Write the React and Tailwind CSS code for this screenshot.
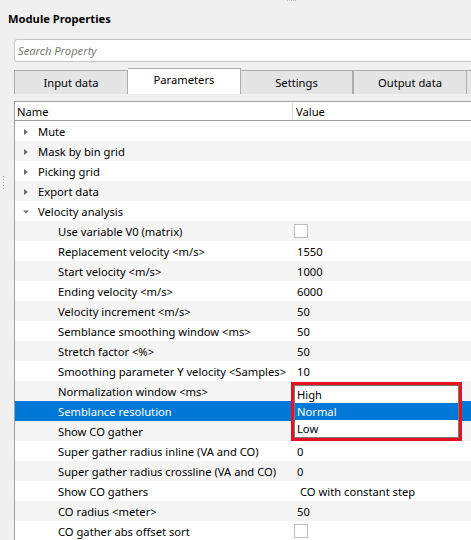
import React from "react";

const rows = [
  { name: "Mute", group: true },
  { name: "Mask by bin grid", group: true },
  { name: "Picking grid", group: true },
  { name: "Export data", group: true },
  { name: "Velocity analysis", group: true, open: true },
  { name: "Use variable V0 (matrix)", check: true },
  { name: "Replacement velocity <m/s>", value: "1550" },
  { name: "Start velocity <m/s>", value: "1000" },
  { name: "Ending velocity <m/s>", value: "6000" },
  { name: "Velocity increment <m/s>", value: "50" },
  { name: "Semblance smoothing window <ms>", value: "50" },
  { name: "Stretch factor <%>", value: "50" },
  { name: "Smoothing parameter Y velocity <Samples>", value: "10" },
  { name: "Normalization window <ms>", value: "" },
  { name: "Semblance resolution", value: "", selected: true },
  { name: "Show CO gather", value: "" },
  { name: "Super gather radius inline (VA and CO)", value: "0" },
  { name: "Super gather radius crossline (VA and CO)", value: "0" },
  { name: "Show CO gathers", value: "CO with constant step", indent: true },
  { name: "CO radius <meter>", value: "50" },
  { name: "CO gather abs offset sort", check: true },
];

function Arrow({ open }) {
  if (open)
    return (
      <svg width="8" height="8" viewBox="0 0 8 8" className="mr-[8px]">
        <path d="M1 2.5 L7 2.5 L4 5.5 Z" fill="#6d6d6d" />
      </svg>
    );
  return (
    <svg width="8" height="8" viewBox="0 0 8 8" className="mr-[8px]">
      <path d="M2 1 L6 4 L2 7 Z" fill="#6d6d6d" />
    </svg>
  );
}

function Row({ r, i }) {
  const bg = r.selected ? "bg-[#0078d7]" : i % 2 === 1 ? "bg-[#f5f5f5]" : "bg-white";
  const color = r.selected ? "text-white" : "text-black";
  return (
    <div className={`flex h-[20px] items-center pt-[1px] ${bg} ${color}`}>
      <div className="flex w-[278px] shrink-0 items-center">
        {r.group ? (
          <div className="flex items-center pl-[7px]">
            <Arrow open={r.open} />
            <span className="whitespace-nowrap">{r.name}</span>
          </div>
        ) : (
          <span className="whitespace-nowrap pl-[43px]">{r.name}</span>
        )}
      </div>
      <div className={`flex flex-1 items-center ${r.indent ? "pl-[7px]" : "pl-[4px]"}`}>
        {r.check ? (
          <div className="ml-[-3px] mt-[-1px] h-[14px] w-[14px] border border-[#bdbdbd] bg-white" />
        ) : (
          <span className="whitespace-nowrap">{r.value}</span>
        )}
      </div>
    </div>
  );
}

export default function App() {
  return (
    <div
      className="relative h-[540px] w-[471px] overflow-hidden bg-[#f0f0f0] text-[11.2px] leading-[16px] text-black"
      style={{ fontFamily: '"Noto Sans", "Open Sans", sans-serif' }}
    >
      {/* top grip */}
      <div className="absolute left-[287px] top-0 flex gap-[1px]">
        {[0, 1, 2, 3, 4].map((k) => (
          <div key={k} className="h-[1px] w-[1px] bg-[#c0c0c0]" />
        ))}
      </div>

      <div className="pl-[8px] pt-[11px] font-bold">Module Properties</div>

      <div className="ml-[14px] mt-[12px] flex h-[23px] w-[470px] items-center rounded-[3px] border border-[#c4c4c4] bg-white pl-[3px] italic text-[#7a7a7a]">
        Search Property
      </div>

      {/* tabs */}
      <div className="ml-[14px] mt-[6px] flex h-[26px] w-[480px] items-end">
        <div className="flex h-[24px] w-[114px] shrink-0 items-center justify-center border border-b-0 border-[#adadad] bg-[#e5e5e5]">
          Input data
        </div>
        <div className="flex h-[26px] w-[113px] shrink-0 items-center justify-center border border-b-0 border-l-0 border-[#adadad] bg-white pb-[3px]">
          Parameters
        </div>
        <div className="flex h-[24px] w-[112px] shrink-0 items-center justify-center border border-b-0 border-l-0 border-[#adadad] bg-[#e5e5e5]">
          Settings
        </div>
        <div className="flex h-[24px] w-[114px] shrink-0 items-center justify-center border border-b-0 border-[#adadad] bg-[#e5e5e5]">
          Output data
        </div>
        <div className="h-[24px] w-[40px] shrink-0 border border-b-0 border-l-0 border-[#adadad] bg-[#e5e5e5]" />
      </div>

      <div className="flex">
        {/* left gutter with splitter grip */}
        <div className="flex w-[14px] shrink-0 flex-col items-start pl-[3px] pt-[82px]">
          {[0, 1, 2, 3, 4].map((k) => (
            <div key={k} className="mb-[2px] h-[1px] w-[1px] bg-[#a8a8a8]" />
          ))}
        </div>

        <div className="relative mt-[7px] w-[480px] shrink-0 border-l border-t border-[#a0a0a0] bg-white">
          {/* header */}
          <div className="flex h-[19px] items-center border-b border-[#a0a0a0] bg-white pt-[1px]">
            <div className="flex h-full w-[278px] shrink-0 items-center border-r border-[#d8d8d8] pl-[2px]">
              Name
            </div>
            <div className="pl-[3px]">Value</div>
          </div>
          {rows.map((r, i) => (
            <Row key={i} r={r} i={i} />
          ))}

          {/* dropdown popup */}
          <div className="absolute left-[276px] top-[280px] w-[171px] border-[3px] border-[#e81123]">
            <div className="border border-[#7a7a7a] bg-white">
              <div className="flex h-[17px] items-center pl-[2px]">High</div>
              <div className="flex h-[17px] items-center bg-[#0078d7] pl-[2px] text-white">Normal</div>
              <div className="flex h-[17px] items-center pl-[2px]">Low</div>
            </div>
          </div>
        </div>
      </div>
    </div>
  );
}
